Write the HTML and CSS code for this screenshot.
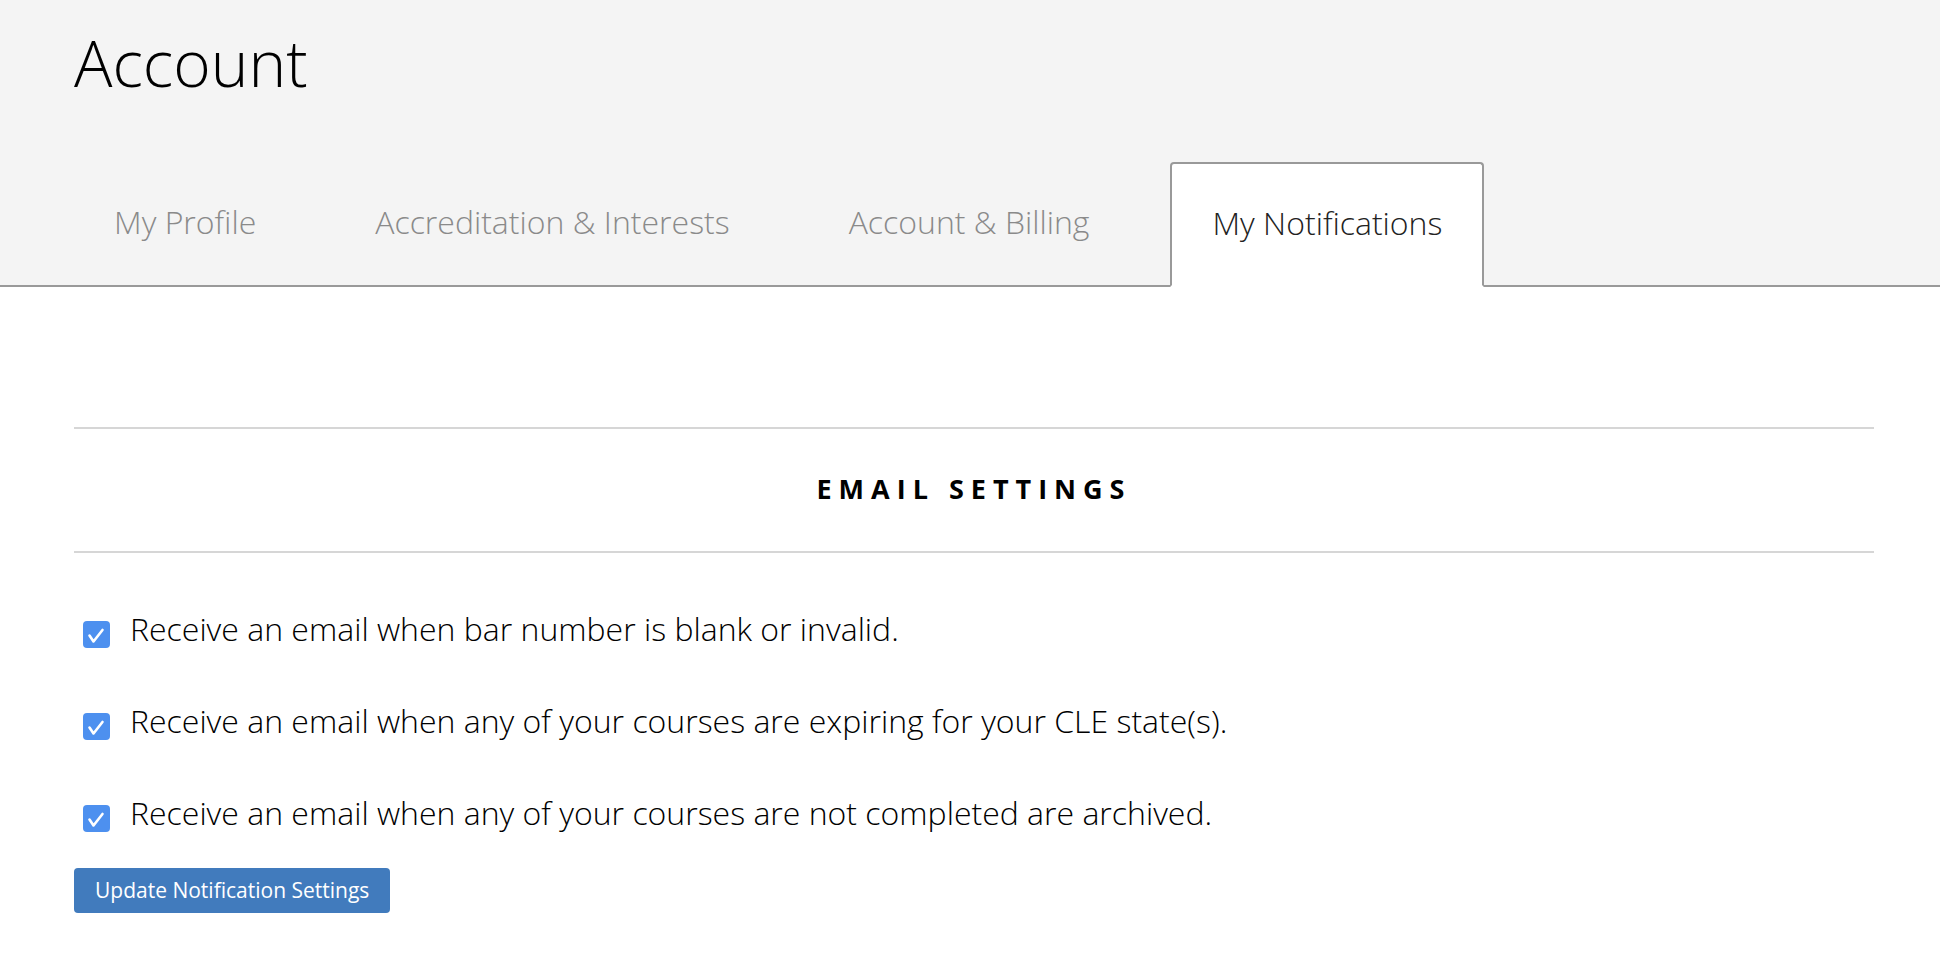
FILE: index.html
```html
<!DOCTYPE html>
<html lang="en">
<head>
  <meta charset="UTF-8" />
  <meta name="viewport" content="width=device-width, initial-scale=1" />
  <title>Account - My Notifications</title>
  <link rel="stylesheet" href="styles.css">
</head>
<body>
  <header class="account-header">
    <div class="wrap">
      <h1 class="page-title">Account</h1>
      <nav class="tabs" aria-label="Account sections">
        <a class="tab" href="#">My Profile</a>
        <a class="tab" href="#">Accreditation &amp; Interests</a>
        <a class="tab" href="#">Account &amp; Billing</a>
        <a class="tab active" href="#" aria-current="page">My Notifications</a>
      </nav>
    </div>
  </header>

  <main class="wrap content">
    <h2 class="section-title">Email Settings</h2>

    <form class="settings" onsubmit="return false;">
      <label class="option">
        <input type="checkbox" checked />
        <span class="box" aria-hidden="true">
          <svg viewBox="0 0 27 27" width="27" height="27"><path d="M6.5 14.5l4 6 9-11.5" fill="none" stroke="#fff" stroke-width="2.6" stroke-linecap="round" stroke-linejoin="round"/></svg>
        </span>
        <span class="option-text">Receive an email when bar number is blank or invalid.</span>
      </label>
      <label class="option">
        <input type="checkbox" checked />
        <span class="box" aria-hidden="true">
          <svg viewBox="0 0 27 27" width="27" height="27"><path d="M6.5 14.5l4 6 9-11.5" fill="none" stroke="#fff" stroke-width="2.6" stroke-linecap="round" stroke-linejoin="round"/></svg>
        </span>
        <span class="option-text">Receive an email when any of your courses are expiring for your CLE state(s).</span>
      </label>
      <label class="option">
        <input type="checkbox" checked />
        <span class="box" aria-hidden="true">
          <svg viewBox="0 0 27 27" width="27" height="27"><path d="M6.5 14.5l4 6 9-11.5" fill="none" stroke="#fff" stroke-width="2.6" stroke-linecap="round" stroke-linejoin="round"/></svg>
        </span>
        <span class="option-text">Receive an email when any of your courses are not completed are archived.</span>
      </label>

      <button type="submit" class="btn-primary">Update Notification Settings</button>
    </form>
  </main>
</body>
</html>
```

FILE: styles.css
```css
body {
  margin: 0;
  font-family: 'Open Sans', 'Noto Sans', sans-serif;
  color: #111;
  background: #fff;
}
.wrap {
  width: 1800px;
  margin-left: 74px;
}

/* header + tabs */
.account-header {
  background: #f4f4f4;
  border-bottom: 2px solid #999;
}
.page-title {
  margin: 0;
  padding-top: 19px;
  font-size: 64px;
  font-weight: 300;
  color: #000;
}
.tabs {
  display: flex;
  align-items: flex-end;
  gap: 35px;
  margin-top: 54px;
  margin-left: -2px;
  margin-bottom: -2px;
}
.tab {
  padding: 38px 40px 42px;
  border: 2px solid transparent;
  border-radius: 4px 4px 0 0;
  font-size: 32px;
  font-weight: 300;
  color: #8a8a8a;
  text-decoration: none;
}
.tab.active {
  margin-left: 4px;
  padding-top: 37px;
  padding-bottom: 41px;
  background: #fff;
  border-color: #999;
  border-bottom-color: #fff;
  color: #222;
}

/* settings */
.content {
  padding-top: 140px;
}
.section-title {
  margin: 0;
  padding: 41px 0 44px;
  border-top: 2px solid #d6d6d6;
  border-bottom: 2px solid #d6d6d6;
  text-align: center;
  font-size: 27px;
  font-weight: 700;
  letter-spacing: 7px;
  text-transform: uppercase;
  color: #000;
}
.settings {
  display: flex;
  flex-direction: column;
  align-items: flex-start;
  padding-top: 54px;
}
.option {
  display: flex;
  align-items: flex-start;
  margin-bottom: 49px;
  cursor: pointer;
}
.option:last-of-type {
  margin-bottom: 34px;
}
.option input {
  display: none;
}
.box {
  display: flex;
  width: 27px;
  height: 27px;
  margin: 14px 20px 0 9px;
  border-radius: 4px;
  background: #4d90ef;
}
.option-text {
  font-size: 32px;
  font-weight: 300;
  color: #000;
}
.btn-primary {
  padding: 8px 21px 9px;
  border: none;
  border-radius: 4px;
  background: #417bbd;
  color: #fff;
  font-family: inherit;
  font-size: 21px;
  cursor: pointer;
}
```
